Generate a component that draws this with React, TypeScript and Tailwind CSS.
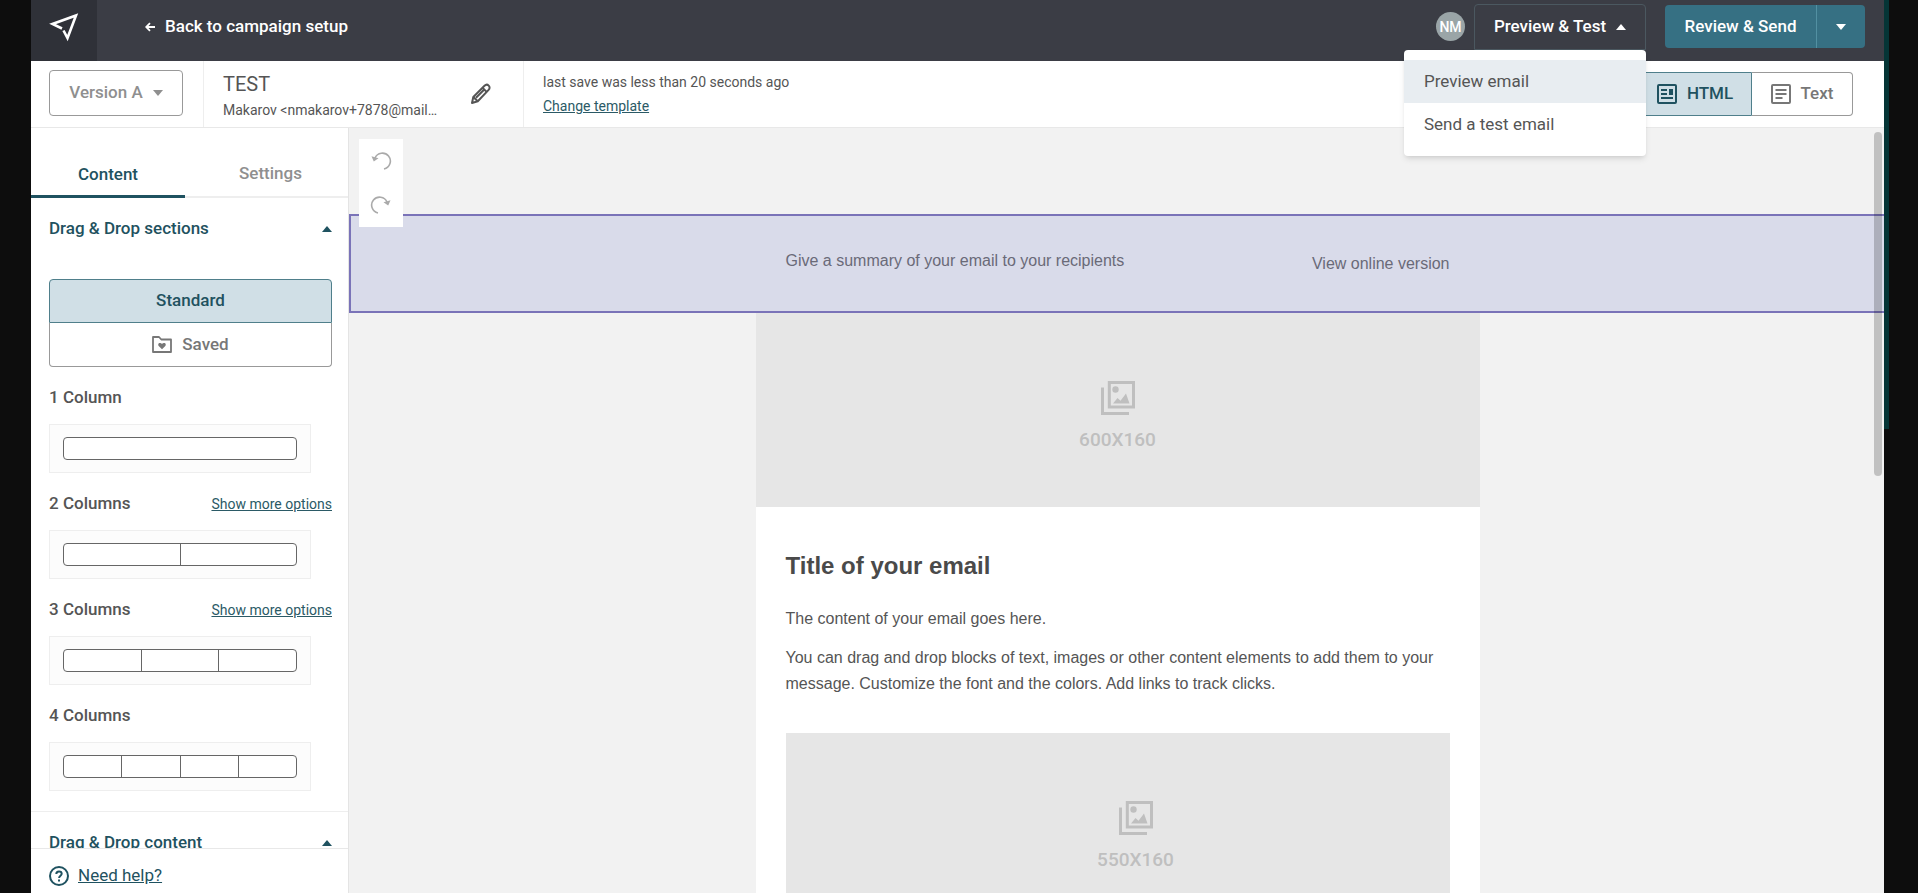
import { useState } from "react";
import type { ReactNode } from "react";

const Caret = ({ up = false, className = "" }: { up?: boolean; className?: string }) => (
  <svg width="10" height="6" viewBox="0 0 10 6" fill="currentColor" className={className} aria-hidden="true">
    {up ? <path d="M5 0 10 6H0z" /> : <path d="M0 0h10L5 6z" />}
  </svg>
);

const PlaneLogo = () => (
  <svg width="30" height="30" viewBox="0 0 30 30" fill="none" stroke="white" strokeWidth="2.6" aria-hidden="true">
    <path d="M13 16.500 3.500 12 27 3.500 18.500 26 14.500 18.500" />
  </svg>
);

const PencilIcon = () => (
  <svg width="22" height="22" viewBox="0 0 22 22" fill="none" stroke="currentColor" strokeWidth="2" strokeLinejoin="round" aria-hidden="true">
    <path d="M2 20l1.300-6L14.500 2.800c1.300-1.300 3.100-1.300 4.200-.2 1.200 1.200 1.200 3-.1 4.300L7.800 18.200z" />
    <path d="M3.300 14l4.500 4.200M12.500 4.800l4.400 4.300M6 14.800l8-8" />
  </svg>
);

const UndoIcon = ({ flip = false }: { flip?: boolean }) => (
  <svg width="22" height="20" viewBox="0 0 22 20" fill="none" stroke="currentColor" strokeWidth="1.600" aria-hidden="true">
    <g transform={flip ? "matrix(-1 0 0 1 22 0)" : undefined}>
      <path d="M5 7a8 8 0 1 1 9 11" />
      <path d="M1.500 5.200 8.500 7.200 3.800 10.500z" fill="currentColor" stroke="none" />
    </g>
  </svg>
);

const FolderHeartIcon = () => (
  <svg width="20" height="17" viewBox="0 0 20 17" fill="none" stroke="currentColor" strokeWidth="1.800" aria-hidden="true">
    <path d="M1 1h6l2.300 2.500H19V16H1z" strokeLinejoin="round" />
    <path
      d="M10 13.200 6.700 10c-.8-.8-.6-2.400.6-2.900 1-.4 2.100 0 2.700.8.600-.8 1.700-1.200 2.700-.8 1.200.5 1.400 2.100.6 2.900z"
      fill="currentColor"
      stroke="none"
    />
  </svg>
);

const HtmlIcon = () => (
  <svg width="20" height="20" viewBox="0 0 20 20" fill="none" stroke="currentColor" strokeWidth="2" aria-hidden="true">
    <rect x="1" y="1" width="18" height="18" rx="1" />
    <path d="M4 6h6M4 10h6M4 14h12" />
    <path d="M12 5h4v6h-4z" fill="currentColor" stroke="none" />
  </svg>
);

const TextIcon = () => (
  <svg width="20" height="20" viewBox="0 0 20 20" fill="none" stroke="currentColor" strokeWidth="2" aria-hidden="true">
    <rect x="1" y="1" width="18" height="18" rx="1" />
    <path d="M4.500 6h11M4.500 10h11M4.500 14h7" />
  </svg>
);

const HelpIcon = () => (
  <svg width="20" height="20" viewBox="0 0 20 20" fill="none" stroke="currentColor" strokeWidth="2" aria-hidden="true">
    <circle cx="10" cy="10" r="9" />
    <path d="M7.300 8c0-1.600 1.200-2.600 2.700-2.600s2.700 1 2.700 2.400c0 1.900-2.600 2-2.600 4.200M10 13.500v2" />
  </svg>
);

const GalleryIcon = () => (
  <svg width="34" height="34" viewBox="0 0 34 34" fill="none" stroke="currentColor" strokeWidth="3" aria-hidden="true">
    <path d="M8.300 1.500h24.200v24.500H8.300z" />
    <path d="M1.500 6.500v26H28" />
    <circle cx="14.500" cy="8.500" r="3.200" fill="currentColor" stroke="none" />
    <path d="M12 22.500l4.500-5.500 3 2.800L25 12.500l3.500 10z" fill="currentColor" stroke="none" />
  </svg>
);

const columnSections = [
  { label: "1 Column", columns: 1, more: false },
  { label: "2 Columns", columns: 2, more: true },
  { label: "3 Columns", columns: 3, more: true },
  { label: "4 Columns", columns: 4, more: false },
];

const ColumnSection = ({ label, columns, more }: { label: string; columns: number; more: boolean }) => (
  <section className="mb-[14px]">
    <div className="flex h-[34px] items-center justify-between">
      <h3 className="text-[17px] font-medium text-[#555]">{label}</h3>
      {more && (
        <a href="#options" className="text-sm text-[#2b5a66] underline">
          Show more options
        </a>
      )}
    </div>
    <button
      type="button"
      aria-label={label}
      className="mt-[9px] block w-[262px] border border-[#eee] bg-[#fcfcfc] px-[13px] py-3"
    >
      <span className="flex h-[23px] divide-x divide-[#666] rounded border border-[#666] bg-white">
        {Array.from({ length: columns }, (_, i) => (
          <span key={i} className="flex-1" />
        ))}
      </span>
    </button>
  </section>
);

const Placeholder = ({ size, className = "" }: { size: string; className?: string }) => (
  <div className={`flex h-[194px] flex-col items-center bg-[#e6e6e6] pt-[68px] text-[#bfbfbf] ${className}`}>
    <GalleryIcon />
    <span className="mt-3 text-[19px] leading-[26px] font-medium">{size}</span>
  </div>
);

const MenuItem = ({ active = false, children }: { active?: boolean; children: ReactNode }) => (
  <button
    type="button"
    role="menuitem"
    className={`block h-[43px] w-full px-5 text-left text-[17px] text-[#555] ${active ? "bg-[#e8edf1]" : ""}`}
  >
    {children}
  </button>
);

const Header = () => {
  const [open, setOpen] = useState(true);

  return (
    <header className="flex h-[61px] shrink-0 items-start justify-between bg-[#3b3d45] text-white">
      <div className="flex items-center">
        <a href="#home" aria-label="Home" className="flex h-[61px] w-[66px] items-start justify-center bg-[#2f3138] pt-3">
          <PlaneLogo />
        </a>
        <a href="#setup" className="ml-12 flex h-[54px] items-center gap-[10px] self-start text-[17px] font-medium">
          <svg width="10" height="10" viewBox="0 0 10 10" fill="none" stroke="currentColor" strokeWidth="1.800" aria-hidden="true">
            <path d="M10 5H1.500M5 1.200 1.200 5 5 8.800" />
          </svg>
          Back to campaign setup
        </a>
      </div>
      <div className="flex pt-1 pr-[19px]">
        <span className="mt-2 mr-[9px] flex size-[29px] items-center justify-center rounded-full bg-[#9aa5a7] text-sm font-medium">
          NM
        </span>
        <div className="relative">
          <button
            type="button"
            aria-expanded={open}
            onClick={() => setOpen(!open)}
            className="flex h-[46px] w-[172px] items-center justify-center gap-[10px] rounded-t border border-[#4b5860] text-[17px] font-medium"
          >
            Preview &amp; Test
            <Caret up />
          </button>
          {open && (
            <div role="menu" className="absolute top-[46px] right-0 z-10 w-[242px] rounded bg-white py-[10px] shadow-md">
              <MenuItem active>Preview email</MenuItem>
              <MenuItem>Send a test email</MenuItem>
            </div>
          )}
        </div>
        <div className="mt-px ml-[19px] flex h-[43px] overflow-hidden rounded-sm bg-[#367083]">
          <button type="button" className="w-[151px] text-[17px] font-medium">
            Review &amp; Send
          </button>
          <button type="button" aria-label="More send options" className="flex w-[49px] items-center justify-center border-l border-[#5290a2]">
            <Caret />
          </button>
        </div>
      </div>
    </header>
  );
};

const Toolbar = () => (
  <div className="flex h-[67px] shrink-0 justify-between border-b border-[#e8e8e8] bg-white">
    <div className="flex">
      <div className="flex w-[173px] items-center border-r border-[#eee] pb-0.5 pl-[18px]">
        <button
          type="button"
          className="flex h-[46px] w-[134px] items-center justify-center gap-[10px] rounded border border-[#999] text-[17px] font-medium text-[#8f8f8f]"
        >
          Version A
          <Caret />
        </button>
      </div>
      <div className="flex w-80 items-center justify-between border-r border-[#eee] pr-[31px] pl-[19px] text-[#555]">
        <div className="pt-1">
          <div className="text-[20px] leading-7">TEST</div>
          <div className="text-sm leading-6">Makarov &lt;nmakarov+7878@mail…</div>
        </div>
        <button type="button" aria-label="Edit details">
          <PencilIcon />
        </button>
      </div>
      <div className="flex flex-col justify-center pl-[19px] text-sm leading-6 text-[#555]">
        <span>last save was less than 20 seconds ago</span>
        <a href="#template" className="text-[#2b5a66] underline">
          Change template
        </a>
      </div>
    </div>
    <div className="flex items-center pr-[31px] text-[17px] font-medium">
      <button type="button" className="flex h-11 w-[114px] items-center justify-center gap-[10px] rounded-l border border-[#4f7f8b] bg-[#d0dfe6] text-[#1f5260]">
        <HtmlIcon />
        HTML
      </button>
      <button type="button" className="flex h-11 w-[101px] items-center justify-center gap-[10px] rounded-r border border-l-0 border-[#999] text-[#777]">
        <TextIcon />
        Text
      </button>
    </div>
  </div>
);

const Sidebar = () => (
  <aside className="flex w-[318px] shrink-0 flex-col border-r border-[#e4e4e4] bg-white">
    <div className="flex h-[70px] shrink-0 border-b-2 border-[#eee] text-[17px] font-medium" role="tablist">
      <button type="button" role="tab" aria-selected className="-mb-0.5 w-[154px] border-b-3 border-[#1f5260] pt-[26px] text-[#1f5260]">
        Content
      </button>
      <button type="button" role="tab" aria-selected={false} className="flex-1 pt-6 pl-2 text-[#8f8f8f]">
        Settings
      </button>
    </div>
    <div className="min-h-0 flex-1 overflow-hidden">
      <div className="border-b border-[#eee] pr-4 pb-1.5 pl-[18px]">
        <button type="button" className="flex h-[62px] w-full items-center justify-between text-[17px] font-medium text-[#1f5260]">
          Drag &amp; Drop sections
          <Caret up />
        </button>
        <div className="mt-[19px] mb-[14px] flex flex-col text-[17px] font-medium">
          <button type="button" className="h-11 rounded-t border border-[#4f7f8b] bg-[#d0dfe6] text-[#1f5260]">
            Standard
          </button>
          <button type="button" className="flex h-11 items-center justify-center gap-[10px] rounded-b border border-t-0 border-[#999] text-[#777]">
            <FolderHeartIcon />
            Saved
          </button>
        </div>
        {columnSections.map((section) => (
          <ColumnSection key={section.label} {...section} />
        ))}
      </div>
      <button type="button" className="flex h-[62px] w-full items-center justify-between pr-4 pl-[18px] text-[17px] font-medium text-[#1f5260]">
        Drag &amp; Drop content
        <Caret up />
      </button>
    </div>
    <div className="flex h-[45px] shrink-0 items-center gap-[9px] border-t border-[#e8e8e8] pt-[10px] pl-[18px] text-[#1f5260]">
      <HelpIcon />
      <a href="#help" className="text-[17px] underline">
        Need help?
      </a>
    </div>
  </aside>
);

const Canvas = () => (
  <main className="relative min-w-0 flex-1 overflow-hidden bg-[#f2f2f2] pt-[86px]">
    <div className="absolute top-[11px] left-[10px] z-10 flex w-11 flex-col bg-white text-[#aaa]">
      <button type="button" aria-label="Undo" className="flex h-11 items-center justify-center">
        <UndoIcon />
      </button>
      <button type="button" aria-label="Redo" className="flex h-11 items-center justify-center">
        <UndoIcon flip />
      </button>
    </div>
    <div className="h-[99px] border-2 border-r-0 border-[#7a73b8] bg-[#d9dbea] font-['Liberation_Sans',sans-serif] text-base text-[#6a6a78]">
      <div className="mx-auto flex w-[664px] justify-between pt-[33px]">
        <p>Give a summary of your email to your recipients</p>
        <a href="#online" className="pt-[3px]">
          View online version
        </a>
      </div>
    </div>
    <div className="pl-0.5">
      <article className="mx-auto w-[724px] bg-white">
        <Placeholder size="600X160" />
        <div className="px-[30px] font-['Liberation_Sans',sans-serif] text-base leading-[26px] text-[#555]">
          <h1 className="pt-[43px] text-2xl leading-8 font-bold text-[#4a4a4a]">Title of your email</h1>
          <p className="mt-6">The content of your email goes here.</p>
          <p className="mt-[13px]">
            You can drag and drop blocks of text, images or other content elements to add them to your message.
            Customize the font and the colors. Add links to track clicks.
          </p>
        </div>
        <div className="mt-9 px-[30px]">
          <Placeholder size="550X160" className="pl-9" />
        </div>
      </article>
    </div>
    <div className="absolute top-1 right-0.5 h-[344px] w-2 rounded-full bg-black/20" />
  </main>
);

export default function App() {
  return (
    <div className="flex h-screen bg-[#0d0d0d] font-[Roboto,sans-serif]">
      <div className="ml-[31px] flex min-w-0 flex-1 flex-col">
        <Header />
        <Toolbar />
        <div className="flex min-h-0 flex-1">
          <Sidebar />
          <Canvas />
        </div>
      </div>
      <div className="mr-[29px] h-[429px] w-[5px] bg-[#053536]" />
    </div>
  );
}
